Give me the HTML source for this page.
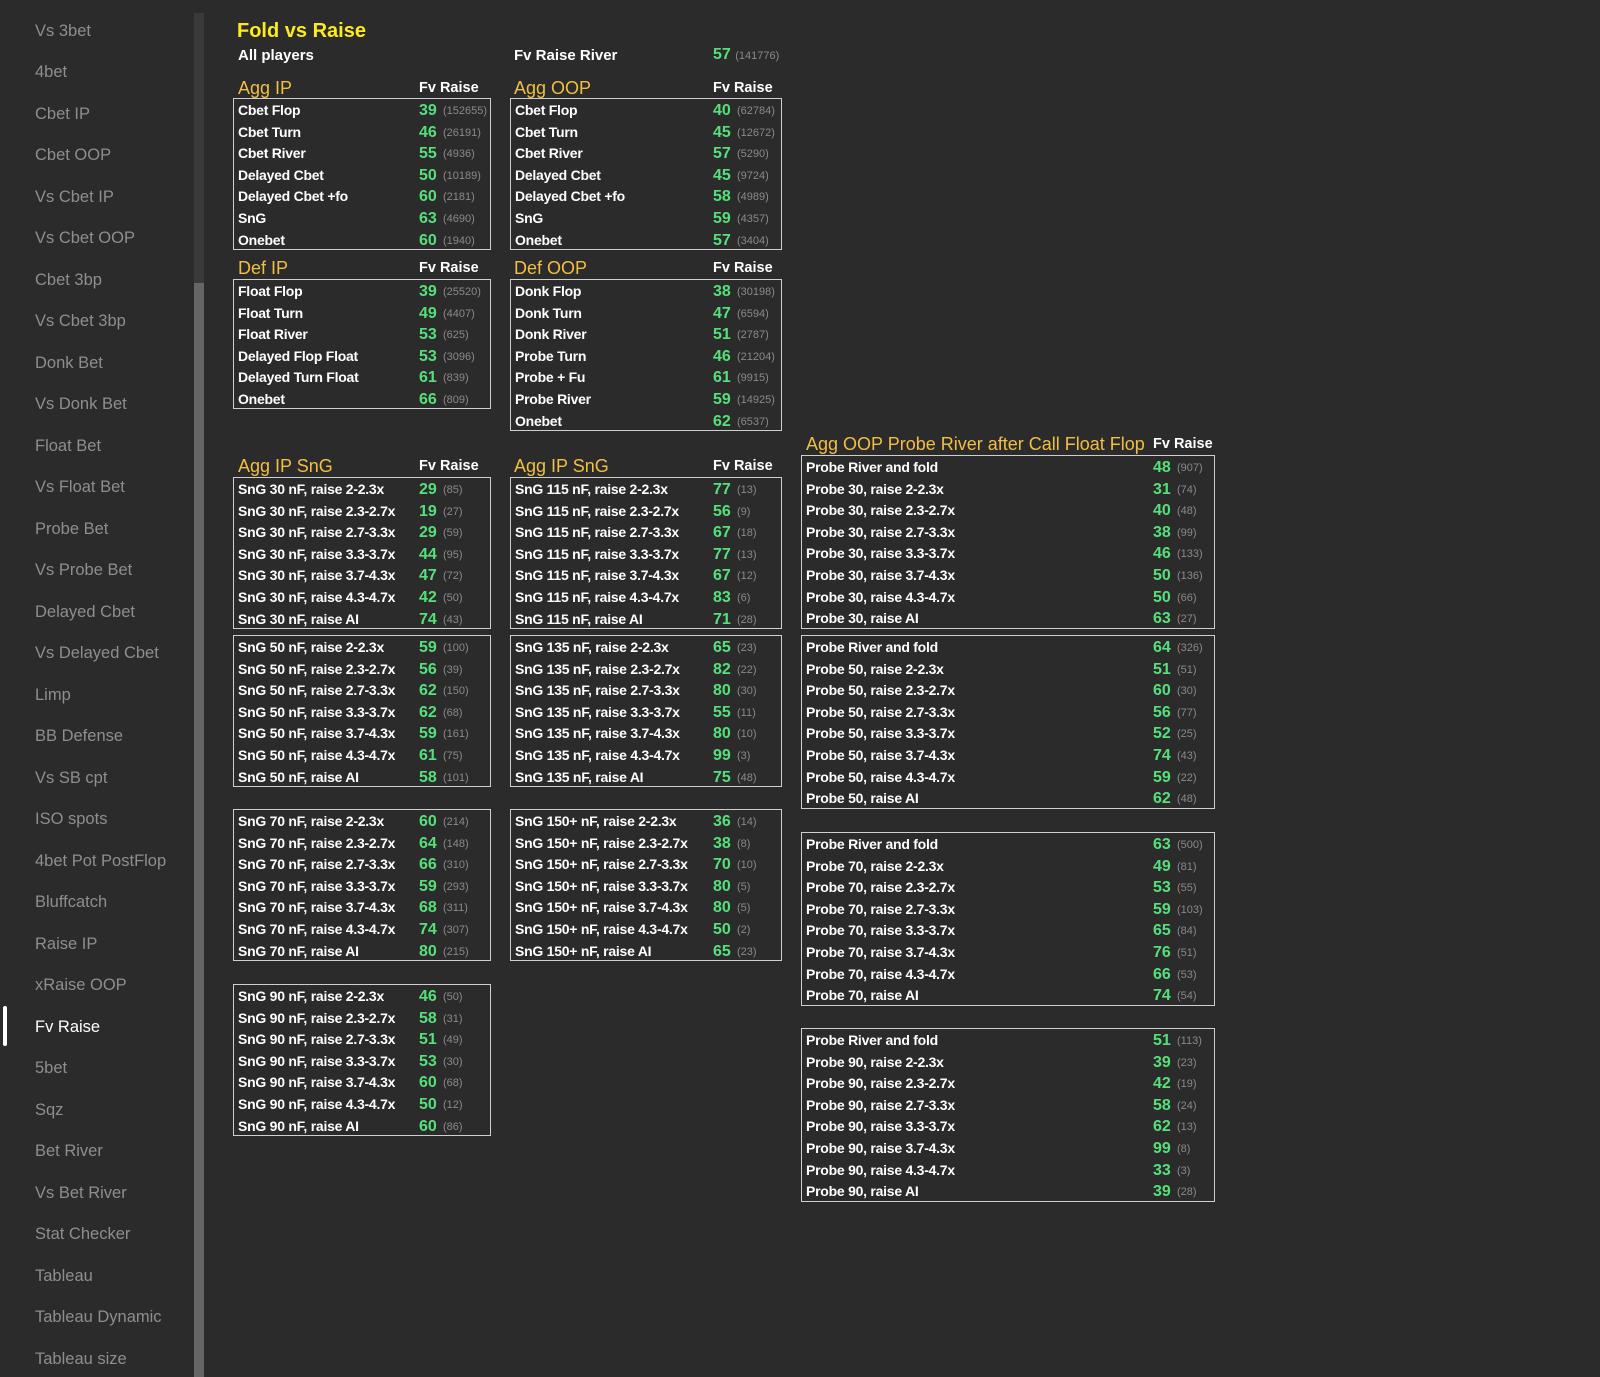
<!DOCTYPE html>
<html><head><meta charset="utf-8"><style>
*{margin:0;padding:0;box-sizing:border-box}
body{width:1600px;height:1377px;background:#2b2b2b;position:relative;overflow:hidden;font-family:"Liberation Sans",sans-serif;color:#fff}
.nav{position:absolute;left:35px;font-size:16.5px;color:#8e8e8e;line-height:20px}
.nav.act{color:#fff}
.bar{position:absolute;left:3px;top:1006px;width:4px;height:40px;background:#fff;border-radius:2px}
.track{position:absolute;left:194px;top:13px;width:10px;height:1364px;background:#3a3a3a}
.thumb{position:absolute;left:194px;top:283px;width:10px;height:1094px;background:#666}
.t{position:absolute;font-weight:bold}
.box{position:absolute;border:1.5px solid #cfcfcf;padding-top:1px}
.box p{position:relative;height:21.6px;line-height:21.6px;font-weight:bold;font-size:14px;letter-spacing:-0.25px;padding-left:4px;white-space:nowrap}
.box i,.box s{position:absolute;font-style:normal;text-decoration:none;letter-spacing:0}
.box i{color:#55e07a;font-size:16px}
.box s{color:#8a8a8a;font-size:11px;font-weight:normal;top:1px}
.c1 i{left:185px}.c1 s{left:209px}
.c2 i{left:202px}.c2 s{left:226px}
.c3 i{left:351px}.c3 s{left:375px}
.h{position:absolute;color:#f2bf42;font-size:18px;font-weight:normal;line-height:22px}
.fh{position:absolute;font-size:14.5px;font-weight:bold;line-height:20px}
</style></head><body>
<div class="track"></div><div class="thumb"></div><div class="bar"></div>
<div class="nav" style="top:21px">Vs 3bet</div>
<div class="nav" style="top:62px">4bet</div>
<div class="nav" style="top:104px">Cbet IP</div>
<div class="nav" style="top:145px">Cbet OOP</div>
<div class="nav" style="top:187px">Vs Cbet IP</div>
<div class="nav" style="top:228px">Vs Cbet OOP</div>
<div class="nav" style="top:270px">Cbet 3bp</div>
<div class="nav" style="top:311px">Vs Cbet 3bp</div>
<div class="nav" style="top:353px">Donk Bet</div>
<div class="nav" style="top:394px">Vs Donk Bet</div>
<div class="nav" style="top:436px">Float Bet</div>
<div class="nav" style="top:477px">Vs Float Bet</div>
<div class="nav" style="top:519px">Probe Bet</div>
<div class="nav" style="top:560px">Vs Probe Bet</div>
<div class="nav" style="top:602px">Delayed Cbet</div>
<div class="nav" style="top:643px">Vs Delayed Cbet</div>
<div class="nav" style="top:685px">Limp</div>
<div class="nav" style="top:726px">BB Defense</div>
<div class="nav" style="top:768px">Vs SB cpt</div>
<div class="nav" style="top:809px">ISO spots</div>
<div class="nav" style="top:851px">4bet Pot PostFlop</div>
<div class="nav" style="top:892px">Bluffcatch</div>
<div class="nav" style="top:934px">Raise IP</div>
<div class="nav" style="top:975px">xRaise OOP</div>
<div class="nav act" style="top:1017px">Fv Raise</div>
<div class="nav" style="top:1058px">5bet</div>
<div class="nav" style="top:1100px">Sqz</div>
<div class="nav" style="top:1141px">Bet River</div>
<div class="nav" style="top:1183px">Vs Bet River</div>
<div class="nav" style="top:1224px">Stat Checker</div>
<div class="nav" style="top:1266px">Tableau</div>
<div class="nav" style="top:1307px">Tableau Dynamic</div>
<div class="nav" style="top:1349px">Tableau size</div>

<div class="t" style="left:237px;top:20px;font-size:20px;color:#fcec1c">Fold vs Raise</div>
<div class="t" style="left:238px;top:47px;font-size:15px">All players</div>
<div class="t" style="left:514px;top:47px;font-size:15px">Fv Raise River</div>
<div class="t" style="left:713px;top:46px;font-size:16px;color:#55e07a">57 <span style="font-size:11px;color:#8a8a8a;font-weight:normal">(141776)</span></div>

<div class="h" style="left:238px;top:77px">Agg IP</div><div class="fh" style="left:419px;top:78px">Fv Raise</div>
<div class="box c1" style="left:233px;top:98px;width:258px;height:152px">
<p>Cbet Flop<i>39</i><s>(152655)</s></p><p>Cbet Turn<i>46</i><s>(26191)</s></p><p>Cbet River<i>55</i><s>(4936)</s></p><p>Delayed Cbet<i>50</i><s>(10189)</s></p><p>Delayed Cbet +fo<i>60</i><s>(2181)</s></p><p>SnG<i>63</i><s>(4690)</s></p><p>Onebet<i>60</i><s>(1940)</s></p></div>

<div class="h" style="left:514px;top:77px">Agg OOP</div><div class="fh" style="left:713px;top:78px">Fv Raise</div>
<div class="box c2" style="left:510px;top:98px;width:272px;height:152px">
<p>Cbet Flop<i>40</i><s>(62784)</s></p><p>Cbet Turn<i>45</i><s>(12672)</s></p><p>Cbet River<i>57</i><s>(5290)</s></p><p>Delayed Cbet<i>45</i><s>(9724)</s></p><p>Delayed Cbet +fo<i>58</i><s>(4989)</s></p><p>SnG<i>59</i><s>(4357)</s></p><p>Onebet<i>57</i><s>(3404)</s></p></div>

<div class="h" style="left:238px;top:257px">Def IP</div><div class="fh" style="left:419px;top:258px">Fv Raise</div>
<div class="box c1" style="left:233px;top:279px;width:258px;height:130px">
<p>Float Flop<i>39</i><s>(25520)</s></p><p>Float Turn<i>49</i><s>(4407)</s></p><p>Float River<i>53</i><s>(625)</s></p><p>Delayed Flop Float<i>53</i><s>(3096)</s></p><p>Delayed Turn Float<i>61</i><s>(839)</s></p><p>Onebet<i>66</i><s>(809)</s></p></div>

<div class="h" style="left:514px;top:257px">Def OOP</div><div class="fh" style="left:713px;top:258px">Fv Raise</div>
<div class="box c2" style="left:510px;top:279px;width:272px;height:152px">
<p>Donk Flop<i>38</i><s>(30198)</s></p><p>Donk Turn<i>47</i><s>(6594)</s></p><p>Donk River<i>51</i><s>(2787)</s></p><p>Probe Turn<i>46</i><s>(21204)</s></p><p>Probe + Fu<i>61</i><s>(9915)</s></p><p>Probe River<i>59</i><s>(14925)</s></p><p>Onebet<i>62</i><s>(6537)</s></p></div>

<div class="h" style="left:238px;top:455px">Agg IP SnG</div><div class="fh" style="left:419px;top:456px">Fv Raise</div>
<div class="h" style="left:514px;top:455px">Agg IP SnG</div><div class="fh" style="left:713px;top:456px">Fv Raise</div>
<div class="h" style="left:806px;top:433px">Agg OOP Probe River after Call Float Flop</div><div class="fh" style="left:1153px;top:434px">Fv Raise</div>

<div class="box c1" style="left:233px;top:477px;width:258px;height:152px">
<p>SnG 30 nF, raise 2-2.3x<i>29</i><s>(85)</s></p><p>SnG 30 nF, raise 2.3-2.7x<i>19</i><s>(27)</s></p><p>SnG 30 nF, raise 2.7-3.3x<i>29</i><s>(59)</s></p><p>SnG 30 nF, raise 3.3-3.7x<i>44</i><s>(95)</s></p><p>SnG 30 nF, raise 3.7-4.3x<i>47</i><s>(72)</s></p><p>SnG 30 nF, raise 4.3-4.7x<i>42</i><s>(50)</s></p><p>SnG 30 nF, raise AI<i>74</i><s>(43)</s></p></div>
<div class="box c1" style="left:233px;top:635px;width:258px;height:152px">
<p>SnG 50 nF, raise 2-2.3x<i>59</i><s>(100)</s></p><p>SnG 50 nF, raise 2.3-2.7x<i>56</i><s>(39)</s></p><p>SnG 50 nF, raise 2.7-3.3x<i>62</i><s>(150)</s></p><p>SnG 50 nF, raise 3.3-3.7x<i>62</i><s>(68)</s></p><p>SnG 50 nF, raise 3.7-4.3x<i>59</i><s>(161)</s></p><p>SnG 50 nF, raise 4.3-4.7x<i>61</i><s>(75)</s></p><p>SnG 50 nF, raise AI<i>58</i><s>(101)</s></p></div>
<div class="box c1" style="left:233px;top:809px;width:258px;height:152px">
<p>SnG 70 nF, raise 2-2.3x<i>60</i><s>(214)</s></p><p>SnG 70 nF, raise 2.3-2.7x<i>64</i><s>(148)</s></p><p>SnG 70 nF, raise 2.7-3.3x<i>66</i><s>(310)</s></p><p>SnG 70 nF, raise 3.3-3.7x<i>59</i><s>(293)</s></p><p>SnG 70 nF, raise 3.7-4.3x<i>68</i><s>(311)</s></p><p>SnG 70 nF, raise 4.3-4.7x<i>74</i><s>(307)</s></p><p>SnG 70 nF, raise AI<i>80</i><s>(215)</s></p></div>
<div class="box c1" style="left:233px;top:984px;width:258px;height:152px">
<p>SnG 90 nF, raise 2-2.3x<i>46</i><s>(50)</s></p><p>SnG 90 nF, raise 2.3-2.7x<i>58</i><s>(31)</s></p><p>SnG 90 nF, raise 2.7-3.3x<i>51</i><s>(49)</s></p><p>SnG 90 nF, raise 3.3-3.7x<i>53</i><s>(30)</s></p><p>SnG 90 nF, raise 3.7-4.3x<i>60</i><s>(68)</s></p><p>SnG 90 nF, raise 4.3-4.7x<i>50</i><s>(12)</s></p><p>SnG 90 nF, raise AI<i>60</i><s>(86)</s></p></div>

<div class="box c2" style="left:510px;top:477px;width:272px;height:152px">
<p>SnG 115 nF, raise 2-2.3x<i>77</i><s>(13)</s></p><p>SnG 115 nF, raise 2.3-2.7x<i>56</i><s>(9)</s></p><p>SnG 115 nF, raise 2.7-3.3x<i>67</i><s>(18)</s></p><p>SnG 115 nF, raise 3.3-3.7x<i>77</i><s>(13)</s></p><p>SnG 115 nF, raise 3.7-4.3x<i>67</i><s>(12)</s></p><p>SnG 115 nF, raise 4.3-4.7x<i>83</i><s>(6)</s></p><p>SnG 115 nF, raise AI<i>71</i><s>(28)</s></p></div>
<div class="box c2" style="left:510px;top:635px;width:272px;height:152px">
<p>SnG 135 nF, raise 2-2.3x<i>65</i><s>(23)</s></p><p>SnG 135 nF, raise 2.3-2.7x<i>82</i><s>(22)</s></p><p>SnG 135 nF, raise 2.7-3.3x<i>80</i><s>(30)</s></p><p>SnG 135 nF, raise 3.3-3.7x<i>55</i><s>(11)</s></p><p>SnG 135 nF, raise 3.7-4.3x<i>80</i><s>(10)</s></p><p>SnG 135 nF, raise 4.3-4.7x<i>99</i><s>(3)</s></p><p>SnG 135 nF, raise AI<i>75</i><s>(48)</s></p></div>
<div class="box c2" style="left:510px;top:809px;width:272px;height:152px">
<p>SnG 150+ nF, raise 2-2.3x<i>36</i><s>(14)</s></p><p>SnG 150+ nF, raise 2.3-2.7x<i>38</i><s>(8)</s></p><p>SnG 150+ nF, raise 2.7-3.3x<i>70</i><s>(10)</s></p><p>SnG 150+ nF, raise 3.3-3.7x<i>80</i><s>(5)</s></p><p>SnG 150+ nF, raise 3.7-4.3x<i>80</i><s>(5)</s></p><p>SnG 150+ nF, raise 4.3-4.7x<i>50</i><s>(2)</s></p><p>SnG 150+ nF, raise AI<i>65</i><s>(23)</s></p></div>

<div class="box c3" style="left:801px;top:455px;width:414px;height:174px">
<p>Probe River and fold<i>48</i><s>(907)</s></p><p>Probe 30, raise 2-2.3x<i>31</i><s>(74)</s></p><p>Probe 30, raise 2.3-2.7x<i>40</i><s>(48)</s></p><p>Probe 30, raise 2.7-3.3x<i>38</i><s>(99)</s></p><p>Probe 30, raise 3.3-3.7x<i>46</i><s>(133)</s></p><p>Probe 30, raise 3.7-4.3x<i>50</i><s>(136)</s></p><p>Probe 30, raise 4.3-4.7x<i>50</i><s>(66)</s></p><p>Probe 30, raise AI<i>63</i><s>(27)</s></p></div>
<div class="box c3" style="left:801px;top:635px;width:414px;height:174px">
<p>Probe River and fold<i>64</i><s>(326)</s></p><p>Probe 50, raise 2-2.3x<i>51</i><s>(51)</s></p><p>Probe 50, raise 2.3-2.7x<i>60</i><s>(30)</s></p><p>Probe 50, raise 2.7-3.3x<i>56</i><s>(77)</s></p><p>Probe 50, raise 3.3-3.7x<i>52</i><s>(25)</s></p><p>Probe 50, raise 3.7-4.3x<i>74</i><s>(43)</s></p><p>Probe 50, raise 4.3-4.7x<i>59</i><s>(22)</s></p><p>Probe 50, raise AI<i>62</i><s>(48)</s></p></div>
<div class="box c3" style="left:801px;top:832px;width:414px;height:174px">
<p>Probe River and fold<i>63</i><s>(500)</s></p><p>Probe 70, raise 2-2.3x<i>49</i><s>(81)</s></p><p>Probe 70, raise 2.3-2.7x<i>53</i><s>(55)</s></p><p>Probe 70, raise 2.7-3.3x<i>59</i><s>(103)</s></p><p>Probe 70, raise 3.3-3.7x<i>65</i><s>(84)</s></p><p>Probe 70, raise 3.7-4.3x<i>76</i><s>(51)</s></p><p>Probe 70, raise 4.3-4.7x<i>66</i><s>(53)</s></p><p>Probe 70, raise AI<i>74</i><s>(54)</s></p></div>
<div class="box c3" style="left:801px;top:1028px;width:414px;height:174px">
<p>Probe River and fold<i>51</i><s>(113)</s></p><p>Probe 90, raise 2-2.3x<i>39</i><s>(23)</s></p><p>Probe 90, raise 2.3-2.7x<i>42</i><s>(19)</s></p><p>Probe 90, raise 2.7-3.3x<i>58</i><s>(24)</s></p><p>Probe 90, raise 3.3-3.7x<i>62</i><s>(13)</s></p><p>Probe 90, raise 3.7-4.3x<i>99</i><s>(8)</s></p><p>Probe 90, raise 4.3-4.7x<i>33</i><s>(3)</s></p><p>Probe 90, raise AI<i>39</i><s>(28)</s></p></div>
</body></html>
